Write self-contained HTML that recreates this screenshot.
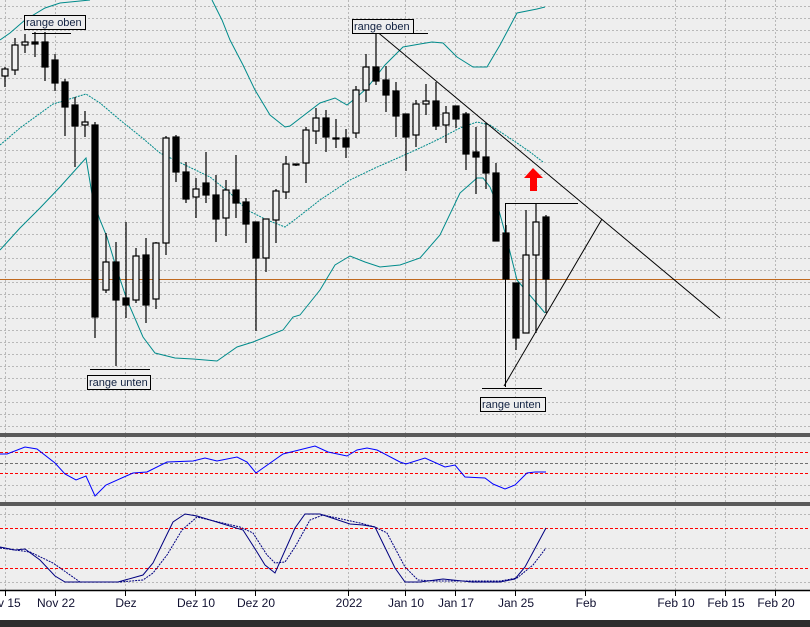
<!DOCTYPE html>
<html><head><meta charset="utf-8"><style>
html,body{margin:0;padding:0;background:#fff;}
svg{display:block;font-family:"Liberation Sans",sans-serif;}
</style></head><body>
<svg width="810" height="627" viewBox="0 0 810 627" xmlns="http://www.w3.org/2000/svg">
<rect x="0" y="0" width="810" height="590" fill="#eeeeee"/>
<rect x="0" y="590" width="810" height="30" fill="#ffffff"/>
<rect x="0" y="620" width="810" height="7" fill="#2d2d2d"/>
<!-- grid -->
<g stroke="#b8b8b8" stroke-width="1" stroke-dasharray="2,2" fill="none">
<path d="M0 6.5H810M0 18.5H810M0 30.5H810M0 42.5H810M0 54.5H810M0 66.5H810M0 78.5H810M0 90.5H810M0 102.5H810M0 114.5H810M0 126.5H810M0 138.5H810M0 150.5H810M0 162.5H810M0 174.5H810M0 186.5H810M0 198.5H810M0 210.5H810M0 222.5H810M0 234.5H810M0 246.5H810M0 258.5H810M0 270.5H810M0 282.5H810M0 294.5H810M0 306.5H810M0 318.5H810M0 330.5H810M0 342.5H810M0 354.5H810M0 366.5H810M0 378.5H810M0 390.5H810M0 402.5H810M0 414.5H810M0 426.5H810"/>
<path d="M0 442.5H810M0 485.5H810M0 495.5H810M0 514.5H810M0 548.5H810M0 582.5H810"/>
<path d="M5.5 0V590M55.5 0V590M125.5 0V590M195.5 0V590M255.5 0V590M348.5 0V590M405.5 0V590M455.5 0V590M515.5 0V590M585.5 0V590M675.5 0V590M725.5 0V590M775.5 0V590"/>
</g>
<!-- separators -->
<rect x="0" y="433" width="810" height="4" fill="#5a5a5a"/>
<rect x="0" y="502" width="810" height="4" fill="#5a5a5a"/>
<!-- orange level -->
<line x1="0" y1="279.5" x2="810" y2="279.5" stroke="#c06a20" stroke-width="1"/>
<!-- bollinger -->
<g stroke="#008b8b" stroke-width="1" fill="none">
<polyline points="0,40 10,33 25,20 45,8 60,3 90,0"/>
<polyline points="212,0 222,20 230,40 243,65 255,90 270,115 285,127 290,126 303,116 320,103 335,98 347,105 357,97 367,88 385,65 403,47 420,44 432,42 443,43 457,57 473,67 487,67 500,45 517,13 537,9 545,7"/>
<polyline points="0,250 20,228 40,208 60,187 86,158 93,200 100,220 107,237 117,270 127,300 143,337 155,353 175,358 193,359 217,361 237,347 253,342 283,330 293,317 300,315 320,290 335,265 350,256 365,262 380,267 400,265 420,258 440,235 460,193 477,178 483,178 490,187 498,207 507,240 517,280 528,293 545,313"/>
<polyline stroke-dasharray="2,1" points="0,145 20,128 53,104 86,94 100,103 120,120 140,136 160,153 185,165 210,177 230,193 247,210 267,220 285,227 297,218 320,200 350,180 375,168 400,157 420,148 437,140 460,128 477,122 490,125 505,135 517,143 530,152 543,162"/>
</g>
<!-- candles -->
<g stroke="#000" stroke-width="1.2">
<path fill="none" d="M5 67V87M15 38V75M25 34V53M35 32V57M45 32V81M55 54V91M65 79V136M75 97V167M85 111V137M95 122V338M106 233V293M116 242V366M126 222V318M136 248V303M146 238V323M156 242V309M166 136V255M176 135V182M186 162V203M196 178V218M206 152V203M216 175V242M226 180V236M236 155V218M246 198V243M256 222V331M266 219V272M276 189V243M286 156V199M296 164V166M306 127V183M316 108V144M326 110V152M336 119V148M346 129V158M356 86V138M366 54V102M376 30V85M386 66V112M396 82V137M406 114V171M416 100V147M426 84V115M436 82V130M446 106V143M456 106V128M466 112V170M476 127V194M486 123V189M496 163V241M506 225V279M516 283V350M526 210V333M536 203V333M546 215V313"/>
<g fill="#f0f0f0">
<rect x="2" y="69" width="6" height="7"/><rect x="12" y="45" width="6" height="25"/><rect x="22" y="42" width="6" height="3"/><rect x="82" y="122" width="6" height="3"/>
<rect x="103" y="262" width="6" height="28"/><rect x="133" y="256" width="6" height="44"/><rect x="153" y="243" width="6" height="56"/><rect x="163" y="138" width="6" height="105"/>
<rect x="193" y="189" width="6" height="8"/><rect x="223" y="190" width="6" height="28"/><rect x="263" y="219" width="6" height="39"/><rect x="273" y="191" width="6" height="29"/><rect x="283" y="164" width="6" height="28"/>
<rect x="303" y="130" width="6" height="33"/><rect x="313" y="118" width="6" height="13"/><rect x="353" y="90" width="6" height="43"/><rect x="363" y="67" width="6" height="23"/>
<rect x="413" y="104" width="6" height="31"/><rect x="423" y="101" width="6" height="3"/><rect x="443" y="113" width="6" height="12"/><rect x="523" y="255" width="6" height="78"/><rect x="533" y="222" width="6" height="33"/>
</g>
<g fill="#000">
<rect x="32" y="42" width="6" height="2"/><rect x="42" y="42" width="6" height="25"/><rect x="52" y="60" width="6" height="23"/><rect x="62" y="82" width="6" height="25"/><rect x="72" y="105" width="6" height="21"/>
<rect x="92" y="125" width="6" height="192"/><rect x="113" y="262" width="6" height="38"/><rect x="123" y="298" width="6" height="7"/><rect x="143" y="255" width="6" height="50"/>
<rect x="173" y="137" width="6" height="35"/><rect x="183" y="172" width="6" height="27"/><rect x="203" y="183" width="6" height="12"/><rect x="213" y="195" width="6" height="24"/><rect x="233" y="190" width="6" height="13"/><rect x="243" y="202" width="6" height="22"/><rect x="253" y="222" width="6" height="36"/>
<rect x="293" y="164" width="6" height="1"/><rect x="323" y="118" width="6" height="19"/><rect x="333" y="138" width="6" height="1"/><rect x="343" y="138" width="6" height="9"/>
<rect x="373" y="67" width="6" height="14"/><rect x="383" y="80" width="6" height="15"/><rect x="393" y="91" width="6" height="25"/><rect x="403" y="114" width="6" height="23"/><rect x="433" y="101" width="6" height="25"/><rect x="453" y="106" width="6" height="13"/>
<rect x="463" y="114" width="6" height="40"/><rect x="473" y="152" width="6" height="5"/><rect x="483" y="157" width="6" height="16"/><rect x="493" y="173" width="6" height="68"/><rect x="503" y="233" width="6" height="46"/><rect x="513" y="283" width="6" height="55"/><rect x="543" y="217" width="6" height="62"/>
</g>
</g>
<!-- trend lines -->
<g stroke="#000" stroke-width="1" fill="none">
<line x1="375" y1="30" x2="720" y2="318"/>
<line x1="505" y1="203.5" x2="578" y2="203.5"/>
<line x1="505.5" y1="203" x2="505.5" y2="387"/>
<line x1="504" y1="386" x2="602" y2="219"/>
<line x1="482" y1="388.5" x2="542" y2="388.5"/>
<line x1="32" y1="33.5" x2="71" y2="33.5"/>
<line x1="352" y1="33.5" x2="428" y2="33.5"/>
<line x1="90" y1="369.5" x2="150" y2="369.5"/>
</g>
<!-- labels -->
<g font-size="11" fill="#102040">
<rect x="24.5" y="15.5" width="61" height="14" fill="#eeeeee" stroke="#000"/><text x="26" y="26">range oben</text>
<rect x="352.5" y="19.5" width="61" height="14" fill="#eeeeee" stroke="#000"/><text x="354" y="30">range oben</text>
<rect x="87.5" y="375.5" width="63" height="14" fill="#eeeeee" stroke="#000"/><text x="89" y="386">range unten</text>
<rect x="480.5" y="397.5" width="65" height="14" fill="#eeeeee" stroke="#000"/><text x="482" y="408">range unten</text>
</g>
<!-- red arrow -->
<path d="M533 168 L543 178 L537 178 L537 191 L530 191 L530 178 L524 178 Z" fill="#ff0000"/>
<!-- indicator 1 -->
<g fill="none" stroke-width="1">
<line x1="0" y1="452.5" x2="810" y2="452.5" stroke="#ff0000" stroke-dasharray="3,2"/>
<line x1="0" y1="473.5" x2="810" y2="473.5" stroke="#ff0000" stroke-dasharray="3,2"/>
<line x1="0" y1="463.5" x2="810" y2="463.5" stroke="#707070" stroke-dasharray="3,2"/>
<polyline stroke="#0000ff" points="0,454 7,454 25,447 37,449 55,463 65,474 76,480 86,476 95,496 106,485 133,473 147,472 167,462 193,461 205,458 217,461 237,457 247,462 256,473 283,454 315,446 328,452 347,456 357,450 367,448 377,450 400,462 406,464 425,458 445,467 455,465 465,477 485,478 493,484 505,489 515,485 527,473 535,472 546,472"/>
</g>
<!-- indicator 2 -->
<g fill="none" stroke-width="1">
<line x1="0" y1="528.5" x2="810" y2="528.5" stroke="#ff0000" stroke-dasharray="3,2"/>
<line x1="0" y1="568.5" x2="810" y2="568.5" stroke="#ff0000" stroke-dasharray="3,2"/>
<polyline stroke="#000080" points="0,547 15,550 25,549 40,560 55,576 65,582 118,582 143,575 153,563 173,522 185,514 197,516 243,530 257,552 265,565 275,573 295,528 305,514 320,514 350,524 363,525 375,527 395,568 405,582 420,582 443,579 472,582 500,582 515,579 525,567 546,528"/>
<polyline stroke="#000080" stroke-dasharray="2,1" points="0,548 30,552 53,563 80,582 120,582 143,580 153,573 167,555 182,530 197,517 240,527 253,533 267,555 275,563 285,562 295,547 310,520 323,515 360,523 375,527 387,533 405,567 418,580 433,581 500,581 517,578 533,565 546,548"/>
</g>
<!-- axis -->
<line x1="0" y1="590.5" x2="810" y2="590.5" stroke="#000" stroke-width="1.5"/>
<g stroke="#000" stroke-width="1"><path d="M5.5 590V596M55.5 590V596M125.5 590V596M195.5 590V596M255.5 590V596M348.5 590V596M405.5 590V596M455.5 590V596M515.5 590V596M585.5 590V596M675.5 590V596M725.5 590V596M775.5 590V596"/></g>
<g font-size="12" fill="#101030" text-anchor="middle">
<text x="6" y="607">ov 15</text><text x="56" y="607">Nov 22</text><text x="126" y="607">Dez</text><text x="196" y="607">Dez 10</text><text x="256" y="607">Dez 20</text><text x="349" y="607">2022</text><text x="406" y="607">Jan 10</text><text x="456" y="607">Jan 17</text><text x="516" y="607">Jan 25</text><text x="586" y="607">Feb</text><text x="676" y="607">Feb 10</text><text x="726" y="607">Feb 15</text><text x="776" y="607">Feb 20</text>
</g>
</svg>
</body></html>
